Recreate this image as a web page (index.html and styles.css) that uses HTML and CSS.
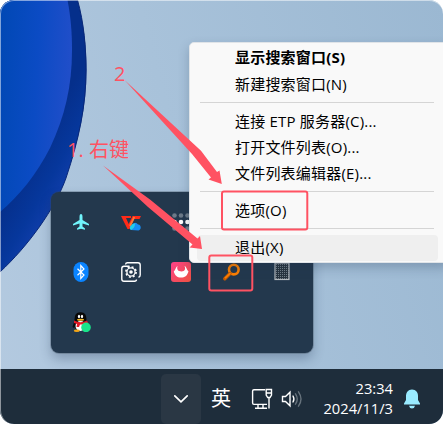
FILE: index.html
```html
<!DOCTYPE html>
<html lang="zh-CN">
<head>
<meta charset="utf-8">
<title>Desktop</title>
<link rel="stylesheet" href="styles.css">
</head>
<body>
<div class="desktop">
  <svg class="wallpaper" width="443" height="370" viewBox="0 0 443 370">
    <defs>
      <linearGradient id="petal" x1="0" y1="0" x2="1" y2="0.15">
        <stop offset="0" stop-color="#0048b4"/><stop offset=".55" stop-color="#0b4bc4"/><stop offset="1" stop-color="#204ec9"/>
      </linearGradient>
      <linearGradient id="under" gradientUnits="userSpaceOnUse" x1="40" y1="140" x2="84" y2="165">
        <stop offset="0" stop-color="#052f8b"/><stop offset=".55" stop-color="#06379c"/><stop offset="1" stop-color="#123fae"/>
      </linearGradient>
    </defs>
    <path d="M0 0H77.5C84 23 86.500 48 86.500 70C86.500 106 79 139 66 178C55 209 28 246 0 272Z" fill="url(#under)"/>
    <path d="M77.500 0C84 23 86 48 86 70C86 106 79 139 66 178C55 209 28 246 0 272" fill="none" stroke="#0a2878" stroke-width="1"/>
    <path d="M0 0H67.500C71 18 72 34 72 50C72 86 65 116 50 148C37 174 18 197 0 212Z" fill="url(#petal)"/>
  </svg>

  <div class="flyout">
    <div class="cell"><svg width="20" height="20" viewBox="0 0 20 20"><path d="M10 2C11 2 11.500 3.300 11.500 5V8L18 12V13.500L11.500 11.500V14.500L14 16.500V17.700L10 16.700L6 17.700V16.500L8.500 14.500V11.500L2 13.500V12L8.500 8V5C8.500 3.300 9 2 10 2Z" fill="#70f4fc"/></svg></div>
    <div class="cell"><svg width="20" height="20" viewBox="0 0 20 20"><path d="M0 4H10V6H5L7.700 12L11.500 4H20L18.500 7H13L8.500 17H6.500Z" fill="#ff2a18"/><path d="M9 14L13.300 5" stroke="#ff7835" stroke-width="1.800"/><path d="M10 18A2.800 2.800 0 0 1 10.500 13.200A3.700 3.700 0 0 1 17 12.500C20 12 21 18 17.500 18.400Z" fill="#168df5"/><path d="M10 18A2.800 2.800 0 0 1 10.500 13.200A3.500 3.500 0 0 1 14 11.500Q14 16 10 18" fill="#24cee8"/></svg></div>
    <div class="cell"><svg width="20" height="20" viewBox="0 0 20 20"><g fill="#6c7a88"><circle cx="3.500" cy="3.500" r="2.300"/><circle cx="10" cy="3.500" r="2.300"/><circle cx="16.500" cy="3.500" r="2.300"/><circle cx="3.500" cy="16.500" r="2.300"/><circle cx="16.500" cy="16.500" r="2.300"/></g><g fill="#fff"><circle cx="3.500" cy="10" r="2.300"/><circle cx="10" cy="10" r="2.300"/><circle cx="16.500" cy="10" r="2.300"/><circle cx="10" cy="16.500" r="2.300"/></g></svg></div>
    <div class="cell"></div>
    <div class="cell"></div>

    <div class="cell"><svg width="20" height="20" viewBox="0 0 20 20"><rect x="2.500" y="0" width="15" height="20" rx="7.500" fill="#0a84ff"/><path d="M6.500 6.800L13 13L9.800 16.500V3.500L13 7L6.500 13.200" fill="none" stroke="#fff" stroke-width="1.200"/></svg></div>
    <div class="cell"><svg width="20" height="20" viewBox="0 0 20 20" fill="none" stroke="#fff" stroke-width="1.400"><path d="M4.500 2.500Q4.800 .8 6.500 .8H17Q19.200 .8 19.200 3V13Q19.200 15 17.500 15.300"/><path d="M8.500 4.300H3Q.8 4.300 .8 6.500V17Q.8 19.200 3 19.200H13.500Q15.500 19.200 15.500 17.500"/><circle cx="10" cy="10" r="5.100" stroke-width="1.600" stroke-dasharray="2 2.005"/><circle cx="10" cy="10" r="4.100" stroke-width="1.300"/><circle cx="10" cy="10" r="1.800" fill="#fff" stroke="none"/></svg></div>
    <div class="cell"><svg width="20" height="20" viewBox="0 0 20 20"><defs><linearGradient id="pink" x1="0" y1="0" x2="1" y2="1"><stop offset="0" stop-color="#ff4289"/><stop offset="1" stop-color="#ed5140"/></linearGradient></defs><rect width="20" height="20" rx="3" fill="url(#pink)"/><path d="M6.500 3.800C5.500 7.500 7 9.500 10.500 9.500C14 9.500 14.800 7 13.500 3.800C15.500 5 15.500 7.500 17.500 9.500C16 14 14 15.500 10 15.500C6 15.500 4 13.500 2.800 9.500C4.500 8 4.500 5.500 6.500 3.800Z" fill="#fff"/></svg></div>
    <div class="cell"><svg width="20" height="20" viewBox="0 0 20 20"><circle cx="11.800" cy="7.600" r="4.800" fill="none" stroke="#ff8000" stroke-width="2.600"/><path d="M8 11.500L2.800 16.700" stroke="#c85b00" stroke-width="3.400" stroke-linecap="round"/><path d="M8.500 11L3 16.200" stroke="#ff8000" stroke-width="1.600"/></svg></div>
    <div class="cell"><svg width="20" height="20" viewBox="0 0 20 20"><defs><pattern id="dots" width="2" height="2" patternUnits="userSpaceOnUse"><rect width="2" height="2" fill="#28343f"/><rect width="1" height="1" fill="#74808a"/></pattern></defs><rect x="3" y="1" width="14" height="16.500" fill="url(#dots)" stroke="#b4babf" stroke-width="1.200"/></svg></div>

    <div class="cell"><svg width="20" height="20" viewBox="0 0 20 20"><path d="M3 10L1.500 15L3 16L5 12ZM15 10L18 14L16 15Z" fill="#080c12"/><ellipse cx="9.500" cy="13" rx="6.500" ry="6" fill="#080c12"/><ellipse cx="9.500" cy="14" rx="5" ry="5" fill="#fff"/><path d="M3.500 9C3.500 3 5 .3 9.500 .3C14 .3 15.500 3 15.500 9Z" fill="#080808"/><path d="M3 8.500Q9.500 12 16 8.500L17 11Q13 13 9 12.500L8 15H5.500L6 12L3 11Z" fill="#e31926"/><ellipse cx="8" cy="4.500" rx="1.100" ry="1.800" fill="#fff"/><ellipse cx="11" cy="4.500" rx="1.100" ry="1.800" fill="#fff"/><ellipse cx="9.500" cy="7.700" rx="3.500" ry="1" fill="#f5b51d"/><ellipse cx="5.800" cy="18.800" rx="3" ry="1.200" fill="#f0a416"/><circle cx="15" cy="15.400" r="4.800" fill="#19e58a"/></svg></div>
  </div>

  <div class="menu">
    <div class="item default">显示搜索窗口(S)</div>
    <div class="item">新建搜索窗口(N)</div>
    <div class="separator"></div>
    <div class="item">连接 ETP 服务器(C)...</div>
    <div class="item">打开文件列表(O)...</div>
    <div class="item">文件列表编辑器(E)...</div>
    <div class="separator"></div>
    <div class="item">选项(O)</div>
    <div class="separator"></div>
    <div class="item hover">退出(X)</div>
  </div>

  <div class="taskbar">
    <div class="overflow"><svg width="16" height="10" viewBox="0 0 16 10"><path d="M1.800 1.800L8 7.800L14.200 1.800" fill="none" stroke="#fff" stroke-width="1.700" stroke-linecap="round"/></svg></div>
    <div class="ime">英</div>
    <svg class="network" width="22" height="22" viewBox="0 0 22 22" fill="none" stroke="#fff" stroke-width="1.400"><path d="M14 1.700H3Q1.600 1.700 1.600 3V15Q1.600 16.400 3 16.400H16M7 16.500V20M12 16.500V20M4 20.300H16"/><path d="M15.200 1.500H20.500V7L19 9.500H16.700L15.200 7ZM15.200 5H20.500M18 9.500V20.500"/></svg>
    <svg class="volume" width="22" height="20" viewBox="0 0 22 20" fill="none" stroke-width="1.400" stroke-linecap="round"><path d="M1.500 7.500H4.500L9 3.200V16.800L4.500 12.500H1.500Z" stroke="#fff"/><path d="M12 7Q13.800 10 12 13" stroke="#fff"/><path d="M14.500 4.800Q18 10 14.500 15.200M17.500 2.800Q22.500 10 17.500 17.200" stroke="#66727c"/></svg>
    <div class="clock"><div>23:34</div><div>2024/11/3</div></div>
    <svg class="bell" width="18" height="20" viewBox="0 0 18 20"><path d="M9 .5C13 .5 15 3.500 15 7V11L17 14.500V15.500H1V14.500L3 11V7C3 3.500 5 .5 9 .5ZM6 16.800H12Q11.500 19.500 9 19.500Q6.500 19.500 6 16.800Z" fill="#99ebff"/></svg>
  </div>

  <svg class="marks" width="443" height="424" viewBox="0 0 443 424">
    <g fill="#ff5262">
      <path d="M124.500 80L201 150.800L217 172L219.500 170.500L221.800 184L208.500 179.500L211 177.500L192 154Z"/>
      <path d="M103 165.500L150 199.500L197.500 238.500L200 236L202 249L189.500 247.500L192.500 244.500L148 207Z"/>
    </g>
    <g fill="none" stroke="#ff5262" stroke-width="2">
      <rect x="222" y="191.500" width="85.300" height="38" rx="2"/>
      <rect x="209.300" y="255.500" width="43" height="35" rx="2"/>
    </g>
  </svg>
  <div class="note note-two">2</div>
  <div class="note note-one">1. 右键</div>
  <div class="edge"></div>
</div>
</body>
</html>
```
FILE: styles.css
```css
html, body {
  margin: 0;
  background: #fff;
}

.desktop {
  position: relative;
  width: 443px;
  height: 424px;
  overflow: hidden;
  border-radius: 14px;
  background: linear-gradient(75deg, #b4cae0 0%, #a8c2da 45%, #9bb8d2 100%);
  font-family: "Open Sans", "Noto Sans CJK SC", sans-serif;
}

.wallpaper, .marks {
  position: absolute;
  left: 0;
  top: 0;
}

.flyout {
  position: absolute;
  left: 51px;
  top: 192px;
  width: 262px;
  height: 161px;
  box-sizing: border-box;
  padding: 5px;
  display: grid;
  grid-template-columns: repeat(5, 50.2px);
  grid-auto-rows: 50px;
  border-radius: 8px;
  background: #23384d;
  box-shadow: 0 0 0 1px rgba(60, 75, 90, .3), 0 6px 12px rgba(30, 50, 80, .3);
}

.cell {
  display: flex;
  align-items: center;
  justify-content: center;
}

.menu {
  position: absolute;
  left: 189px;
  top: 42px;
  width: 260px;
  height: 221px;
  box-sizing: border-box;
  padding: 3px 10px 2px 7px;
  border: 1px solid #e0e4e8;
  border-radius: 5px;
  background: #f9f9f9;
  box-shadow: 0 5px 11px rgba(30, 50, 80, .25);
  color: #000;
}

.item {
  height: 26px;
  padding-left: 38px;
  border-radius: 4px;
  font-size: 15px;
  line-height: 24px;
  letter-spacing: .2px;
  white-space: nowrap;
}

.item.default {
  font-weight: 700;
  line-height: 22px;
}

.item.hover {
  background: #efefef;
}

.separator {
  height: 11px;
  margin: 0 4px 0 3px;
  background: linear-gradient(#d5d5d5, #d5d5d5) 0 4px / 100% 1px no-repeat;
}

.taskbar {
  position: absolute;
  left: 0;
  top: 369px;
  width: 443px;
  height: 55px;
  box-sizing: border-box;
  padding: 5px 22px 0 161px;
  display: flex;
  align-items: center;
  background: #1e2d3b;
  color: #fff;
}

.overflow {
  width: 40px;
  height: 50px;
  display: flex;
  align-items: center;
  justify-content: center;
  border-radius: 5px;
  background: #2a3744;
}

.ime {
  margin-left: 10px;
  width: 20px;
  font-size: 20px;
  line-height: 28px;
}

.network {
  margin-left: 20px;
}

.volume {
  margin-left: 8px;
}

.clock {
  width: 90px;
  margin: 0 0 2px 0;
  font-size: 14.7px;
  line-height: 20px;
  text-align: right;
}

.bell {
  margin-left: 10px;
}

.note {
  position: absolute;
  color: #ff5262;
  font-size: 20px;
  line-height: 28px;
  white-space: nowrap;
}

.note-one {
  left: 67px;
  top: 136px;
}

.note-two {
  left: 114px;
  top: 60px;
}

.edge {
  position: absolute;
  inset: 0;
  border: 1px solid rgba(255, 255, 255, .5);
  border-width: 1px 0 0 1px;
  border-radius: 14px;
}
```
